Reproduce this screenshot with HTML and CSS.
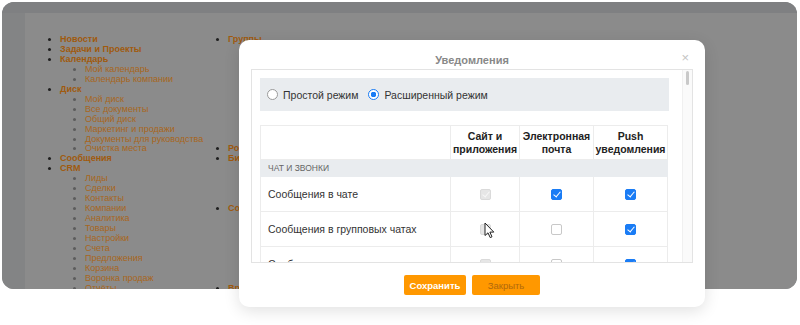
FILE: index.html
```html
<!DOCTYPE html>
<html lang="ru">
<head>
  <meta charset="UTF-8" />
  <title>Уведомления</title>
  <link rel="stylesheet" href="styles.css">
</head>
<body>

  <!-- === PAGE (dimmed) === -->
  <div class="frame">
    <div class="topbar"></div>
    <div class="sidebar"></div>
    <div class="page">
      <ul class="menu">
        <li><a>Новости</a></li>
        <li><a>Задачи и Проекты</a></li>
        <li><a>Календарь</a>
          <ul>
            <li><a>Мой календарь</a></li>
            <li><a>Календарь компании</a></li>
          </ul>
        </li>
        <li><a>Диск</a>
          <ul>
            <li><a>Мой диск</a></li>
            <li><a>Все документы</a></li>
            <li><a>Общий диск</a></li>
            <li><a>Маркетинг и продажи</a></li>
            <li><a>Документы для руководства</a></li>
            <li><a>Очистка места</a></li>
          </ul>
        </li>
        <li><a>Сообщения</a></li>
        <li><a>CRM</a>
          <ul>
            <li><a>Лиды</a></li>
            <li><a>Сделки</a></li>
            <li><a>Контакты</a></li>
            <li><a>Компании</a></li>
            <li><a>Аналитика</a></li>
            <li><a>Товары</a></li>
            <li><a>Настройки</a></li>
            <li><a>Счета</a></li>
            <li><a>Предложения</a></li>
            <li><a>Корзина</a></li>
            <li><a>Воронка продаж</a></li>
            <li><a>Отчёты</a></li>
          </ul>
        </li>
      </ul>
      <ul class="menu">
        <li><a>Группы</a>
          <ul>
            <li><a>Мои группы</a></li>
            <li><a>Все группы</a></li>
            <li><a>Проекты</a></li>
            <li><a>Архив</a></li>
            <li><a>Приглашения</a></li>
            <li><a>Экстранет</a></li>
            <li><a>Шаблоны</a></li>
            <li><a>Теги</a></li>
            <li><a>Избранное</a></li>
            <li><a>Настройки</a></li>
          </ul>
        </li>
        <li><a>Роботы</a></li>
        <li><a>Бизнес-процессы</a>
          <ul>
            <li><a>Мои процессы</a></li>
            <li><a>Задания</a></li>
            <li><a>Шаблоны</a></li>
            <li><a>Журнал</a></li>
          </ul>
        </li>
        <li><a>Сотрудники</a>
          <ul>
            <li><a>Структура</a></li>
            <li><a>Поиск</a></li>
            <li><a>Телефоны</a></li>
            <li><a>Отсутствия</a></li>
            <li><a>Дни рождения</a></li>
            <li><a>Новые</a></li>
            <li><a>Уволенные</a></li>
          </ul>
        </li>
        <li><a>Время и отчёты</a></li>
      </ul>
    </div>
  </div>

  <!-- === MODAL === -->
  <div class="modal">
    <div class="modal-head">
      <span class="modal-title">Уведомления</span>
      <span class="modal-close">×</span>
    </div>

    <div class="scroll-box">
      <div class="scroll-content">
        <div class="mode-panel">
          <label class="radio"><span class="radio-dot"></span>Простой режим</label>
          <label class="radio"><span class="radio-dot on"></span>Расширенный режим</label>
        </div>

        <table class="notify-table">
          <tr class="head">
            <th></th>
            <th>Сайт и<br>приложения</th>
            <th>Электронная<br>почта</th>
            <th>Push<br>уведомления</th>
          </tr>
          <tr class="section">
            <td colspan="4">Чат и звонки</td>
          </tr>
          <tr>
            <td class="name">Сообщения в чате</td>
            <td><span class="cb disabled checked"></span></td>
            <td><span class="cb checked"></span></td>
            <td><span class="cb checked"></span></td>
          </tr>
          <tr>
            <td class="name">Сообщения в групповых чатах</td>
            <td class="hover-cell"><span class="cb disabled"></span>
              <svg class="cursor" width="11" height="17" viewBox="0 0 11 17">
                <path d="M1 1 L1 13.5 L4 10.8 L6.2 15.6 L8 14.8 L5.9 10.1 L9.8 10.1 Z" fill="#fff" stroke="#222" stroke-width="1" stroke-linejoin="round"/>
              </svg>
            </td>
            <td><span class="cb"></span></td>
            <td><span class="cb checked"></span></td>
          </tr>
          <tr>
            <td class="name">Сообщения в каналах</td>
            <td><span class="cb disabled checked"></span></td>
            <td><span class="cb"></span></td>
            <td><span class="cb checked"></span></td>
          </tr>
        </table>
      </div>
      <div class="scroll-track"><div class="scroll-thumb"></div></div>
    </div>

    <div class="modal-foot">
      <button class="btn btn-save">Сохранить</button>
      <button class="btn btn-close">Закрыть</button>
    </div>
  </div>

</body>
</html>
```

FILE: styles.css
```css
* {
  margin: 0;
  padding: 0;
  box-sizing: border-box;
}

html, body {
  height: 100%;
  overflow: hidden;
  font-family: "Liberation Sans", Arial, sans-serif;
}

body {
  background: #fff;
  position: relative;
}

/* === DIMMED PAGE === */
.frame {
  margin: 2px 0 0 2px;
  width: 795px;
  height: 287px;
  border-radius: 12px;
  overflow: hidden;
  background: #838485;
  display: grid;
  grid-template-columns: 23px 1fr;
  grid-template-rows: 11px 1fr;
}

.topbar {
  grid-column: 1 / 3;
  background: #7f8082;
}

.sidebar {
  background: #838485;
}

.page {
  background: #8b8b8b;
  display: flex;
  padding: 22px 0 0 35px;
}

.menu {
  font-size: 9px;
  line-height: 9.96px;
  list-style: disc;
  width: 168px;
}

.menu > li {
  font-weight: bold;
}

.menu > li::marker {
  color: #1f1f1f;
}

.menu a {
  color: #a05a0e;
}

.menu ul {
  list-style: disc;
  padding-left: 25px;
}

.menu ul li {
  font-weight: normal;
}

.menu ul li::marker {
  color: #5c5c5c;
}

.menu ul a {
  color: #a8661c;
}

/* === MODAL === */
.modal {
  position: absolute;
  left: 239px;
  top: 40px;
  width: 466px;
  height: 267px;
  background: #fff;
  border-radius: 10px;
  box-shadow: 0 4px 16px rgba(0, 0, 0, 0.12);
  display: flex;
  flex-direction: column;
  padding: 0 12px;
}

.modal-head {
  height: 29px;
  padding-top: 10px;
  text-align: center;
  position: relative;
}

.modal-title {
  font-size: 11px;
  font-weight: bold;
  line-height: 12px;
  color: #888;
}

.modal-close {
  position: absolute;
  right: 4px;
  top: 11px;
  font-size: 13px;
  line-height: 13px;
  color: #c4c4c4;
}

.scroll-box {
  height: 194px;
  border: 1px solid #e3e3e3;
  display: flex;
  overflow: hidden;
}

.scroll-content {
  flex: 1;
  padding: 8px 13px 0 8px;
}

.scroll-track {
  width: 10px;
  background: #fafafa;
  border-left: 1px solid #f0f0f0;
  position: relative;
}

.scroll-thumb {
  position: absolute;
  top: 1px;
  left: 3px;
  width: 3px;
  height: 14px;
  border-radius: 2px;
  background: #c9c9c9;
}

.mode-panel {
  height: 33px;
  background: #e9ecef;
  display: flex;
  align-items: center;
  gap: 10px;
  padding-left: 7px;
  font-size: 10.5px;
  color: #333;
}

.radio {
  display: flex;
  align-items: center;
  gap: 5px;
}

.radio-dot {
  width: 11px;
  height: 11px;
  border-radius: 50%;
  border: 1px solid #9a9a9a;
  background: #fff;
}

.radio-dot.on {
  border: 1px solid #1a7cf5;
  background: radial-gradient(circle, #1a7cf5 0 2.6px, #fff 3px 100%);
}

.notify-table {
  margin-top: 14px;
  width: 407px;
  border-collapse: collapse;
  table-layout: fixed;
  font-size: 10.5px;
  color: #333;
}

.notify-table td,
.notify-table th {
  border: 1px solid #ececec;
  text-align: center;
  vertical-align: middle;
}

.notify-table th:nth-child(1) { width: 190px; }
.notify-table th:nth-child(2) { width: 69px; }
.notify-table th:nth-child(3) { width: 74px; }
.notify-table th:nth-child(4) { width: 74px; }

.head th {
  height: 34px;
  font-weight: bold;
  color: #222;
  line-height: 13px;
}

.section td {
  height: 17px;
  background: #e9ecef;
  text-align: left;
  padding-left: 7px;
  font-size: 8.5px;
  text-transform: uppercase;
  color: #666;
  border-color: #e9ecef;
}

.notify-table td.name {
  height: 35px;
  text-align: left;
  padding-left: 7px;
}

.hover-cell {
  position: relative;
}

.cursor {
  position: absolute;
  left: 33px;
  top: 10px;
}

/* === CHECKBOXES === */
.cb {
  display: inline-block;
  width: 11px;
  height: 11px;
  border-radius: 2px;
  border: 1px solid #c8c8c8;
  background: #fff;
  vertical-align: middle;
  position: relative;
}

.cb.checked {
  background: #1a7cf5;
  border-color: #1a7cf5;
}

.cb.checked::after {
  content: "";
  position: absolute;
  left: 3px;
  top: 0px;
  width: 3px;
  height: 6px;
  border: solid #fff;
  border-width: 0 1.8px 1.8px 0;
  transform: rotate(40deg);
}

.cb.disabled {
  background: #e6e6e6;
  border-color: #dadada;
}

.cb.disabled.checked::after {
  border-color: #f7f7f7;
}

/* === FOOTER === */
.modal-foot {
  display: flex;
  justify-content: center;
  gap: 6px;
  padding-top: 12px;
}

.btn {
  height: 20px;
  border: none;
  border-radius: 2px;
  background: #ff9800;
  font-family: inherit;
  font-size: 9.5px;
  cursor: pointer;
}

.btn-save {
  width: 62px;
  color: #fff;
  font-weight: bold;
}

.btn-close {
  width: 68px;
  color: #b1690c;
}
```
